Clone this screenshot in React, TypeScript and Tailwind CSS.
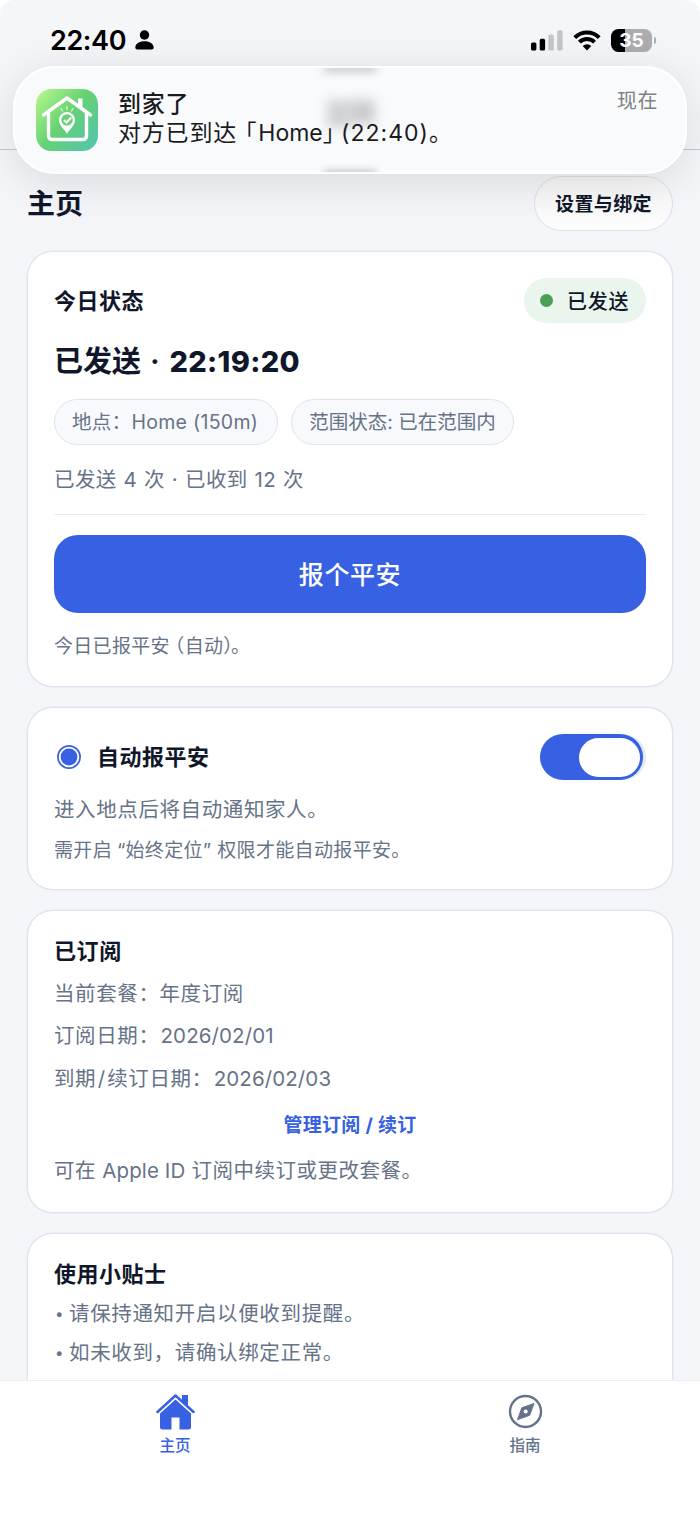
import { FC, ReactNode } from "react";

type CardProps = {
  children: ReactNode;
  className?: string;
};

const Card: FC<CardProps> = ({ children, className = "" }) => {
  return (
    <section
      className={`flex shrink-0 flex-col rounded-[26px] border border-[#dfe4ed] bg-white px-[26px] pt-[26px] shadow-[0_0_0_0.5px_#e2e6ee] ${className}`}
    >
      {children}
    </section>
  );
};

const StatusBar: FC = () => {
  return (
    <header className="h-[150px] shrink-0 border-b border-[#c9cacf] pt-[22px]">
      <div className="flex h-9 items-center justify-between pr-[44px] pl-[50px]">
        <div className="flex items-center gap-[9px]">
          <span className="pt-px text-[27px] leading-9 font-semibold tracking-[-0.4px] text-black">
            22:40
          </span>
          <svg className="h-5 w-[19px]" viewBox="0 0 19 20" fill="#000">
            <circle cx="9.5" cy="5" r="4.7" />
            <path d="M.3 17.6C.3 13.9 4.2 11.3 9.5 11.3s9.2 2.6 9.2 6.3c0 1.3-.8 2-2 2H2.3c-1.2 0-2-.7-2-2z" />
          </svg>
        </div>
        <div className="flex items-center">
          <svg className="h-[21px] w-[33px]" viewBox="0 0 33 21">
            <rect x="0" y="12.5" width="5.4" height="8" rx="1.6" fill="#000" />
            <rect x="8.7" y="8.8" width="5.4" height="11.7" rx="1.6" fill="#000" />
            <rect x="17.4" y="4.5" width="5.4" height="16" rx="1.6" fill="#c5c6ca" />
            <rect x="26.2" y="0.3" width="5.4" height="20.2" rx="1.6" fill="#c5c6ca" />
          </svg>
          <svg className="ml-[9px] h-[21px] w-7" viewBox="0 0 28 21" fill="none" stroke="#000">
            <path d="M1.8 7.6a17.3 17.3 0 0 1 24.4 0" strokeWidth="4.1" />
            <path d="M6.4 12.2a10.8 10.8 0 0 1 15.2 0" strokeWidth="4" />
            <path d="M14 20.5l-4.3-4.4a6.1 6.1 0 0 1 8.6 0z" fill="#000" stroke="none" />
          </svg>
          <div className="ml-[10px] flex h-[23px] w-[41px] items-center justify-center rounded-[7.5px] bg-[linear-gradient(90deg,#000_35%,#acadb0_35%)] text-[19px] leading-none font-bold text-white">
            35
          </div>
          <div className="ml-[1.5px] h-[7px] w-[2.5px] rounded-r-full bg-[#acadb0]" />
        </div>
      </div>
    </header>
  );
};

const AppLogo: FC = () => {
  return (
    <svg className="size-[62px] shrink-0" viewBox="0 0 62 62" fill="none">
      <defs>
        <linearGradient id="logo" x1="2" y1="4" x2="60" y2="52" gradientUnits="userSpaceOnUse">
          <stop stopColor="#b2f58a" />
          <stop offset=".5" stopColor="#66d174" />
          <stop offset="1" stopColor="#55c6a6" />
        </linearGradient>
      </defs>
      <rect width="62" height="62" rx="15.5" fill="url(#logo)" />
      <path d="M42 9.5h4.5v12l-4.5-4z" fill="#fff" />
      <path
        d="M7.5 26L31 9 54.5 26"
        stroke="#fff"
        strokeWidth="3.5"
        strokeLinecap="round"
        strokeLinejoin="round"
      />
      <path
        d="M12.5 24v23a3.5 3.5 0 0 0 3.5 3.5h31a3.5 3.5 0 0 0 3.5-3.5V24"
        stroke="#fff"
        strokeWidth="3.4"
      />
      <path d="M31 45c-2-4.500-8-8-8-14a8 8 0 0 1 16 0c0 6-6 9.500-8 14z" fill="#fff" />
      <circle cx="31" cy="31" r="5.7" fill="#6bd279" />
      <path d="M28 31l2.5 2.5 4.7-5" stroke="#fff" strokeWidth="2" />
      <path
        d="M31 17.5v3M25 19.5l1.5 2.5M37 19.5L35.5 22"
        stroke="#e3f9dd"
        strokeWidth="1.2"
        strokeLinecap="round"
      />
    </svg>
  );
};

const Banner: FC = () => {
  return (
    <div className="absolute top-[66px] left-[13px] flex h-[108px] w-[674px] overflow-hidden rounded-[42px] border-2 border-white bg-[#f9fafc] pt-[21px] pr-[27px] pl-[21px]">
      {/* blurred page text showing through the glass */}
      <div className="absolute -top-1 left-[309px] h-2 w-13 bg-[#777] opacity-40 blur-[4px]" />
      <div className="absolute top-8 left-[312px] h-7 w-6 bg-[#777] opacity-30 blur-[6px]" />
      <div className="absolute top-8 left-[336px] h-6 w-6 bg-[#777] opacity-35 blur-[6px]" />
      <div className="absolute -bottom-1 left-[309px] h-1.5 w-13 bg-[#777] opacity-40 blur-[3px]" />
      <AppLogo />
      <div className="relative ml-5 flex-1 pt-px text-[#1b1b1d]">
        <p className="text-[23px] leading-[29px] font-medium tracking-[0.8px]">到家了</p>
        <p className="text-[23px] leading-[29px] tracking-[0.8px] whitespace-nowrap">
          对方已到达
          <span className="ml-[8px] [font-feature-settings:'halt']">&#x300C;</span>
          <span className="ml-px tracking-normal">Home</span>
          <span className="[font-feature-settings:'halt']">&#x300D;</span>
          <span className="ml-[6px] tracking-[1px]">(22:40)</span>&#x3002;
        </p>
      </div>
      <span className="relative text-xl leading-[25px] tracking-[0.5px] text-[#7f8082]">
        现在
      </span>
    </div>
  );
};

const StatusCard: FC = () => {
  return (
    <Card className="pb-[25px]">
      <div className="flex h-[45px] items-center justify-between">
        <h2 className="pt-0.5 text-[22px] font-bold tracking-[0.5px]">今日状态</h2>
        <div className="flex h-[45px] w-[122px] items-center gap-[14px] rounded-full bg-[#eaf5ed] pl-4 text-xl font-medium tracking-[0.7px] whitespace-nowrap">
          <span className="size-[13px] rounded-full bg-[#4a9f52]" />
          <span className="pt-0.5">已发送</span>
        </div>
      </div>
      <div className="mt-[17px] flex h-[42px] items-center pt-0.5 text-[29px] font-bold whitespace-pre">
        已发送<span className="mx-[2px]"> · </span>
        <span className="ml-px font-extrabold tracking-[0.3px]">22:19:20</span>
      </div>
      <div className="mt-[17px] flex h-[46px] gap-[13px] text-[19.5px] text-[#667388]">
        <span className="flex w-[224px] items-center rounded-full border-[1.5px] border-[#dfe4ed] bg-[#f8f9fc] pt-0.5 pl-[17px] tracking-[0.3px] whitespace-nowrap">
          地点&#xFF1A;<span className="tracking-[0.3px]">Home (150m)</span>
        </span>
        <span className="flex w-[223px] items-center justify-center rounded-full border-[1.5px] border-[#dfe4ed] bg-[#f8f9fc] pt-0.5 whitespace-nowrap">
          范围状态: 已在范围内
        </span>
      </div>
      <p className="mt-5 text-[20.5px] leading-[30px] tracking-[0.4px] text-[#667388] [word-spacing:0.7px]">
        已发送 4 次 · 已收到 12 次
      </p>
      <hr className="mt-[19px] border-[#e8ebf1]" />
      <button className="mt-5 h-[78px] rounded-[24px] bg-[#3761e2] pt-[3px] text-[25px] font-medium tracking-[0.6px] text-white">
        报个平安
      </button>
      <p className="mt-[19px] -mb-px text-[19px] leading-[30px] tracking-[0.3px] text-[#667388]">
        今日已报平安
        <span className="ml-[5px] [font-feature-settings:'halt']">&#xFF08;</span>自动
        <span className="[font-feature-settings:'halt']">&#xFF09;</span>
        <span className="-ml-[2px]">&#x3002;</span>
      </p>
    </Card>
  );
};

const AutoCard: FC = () => {
  return (
    <Card className="mt-5 pb-[23px]">
      <div className="flex h-[46px] items-center">
        <svg className="ml-[3px] size-6" viewBox="0 0 24 24">
          <circle cx="12" cy="12" r="11.1" fill="none" stroke="#3761e2" strokeWidth="1.7" />
          <circle cx="12" cy="12" r="8.4" fill="#3761e2" />
        </svg>
        <h2 className="ml-4 flex-1 pt-px text-[22px] font-bold tracking-[0.5px]">自动报平安</h2>
        <div className="h-[46px] w-[106px] rounded-full bg-[#e4e8f1]">
          <div className="flex h-[46px] w-[103px] items-center justify-end rounded-full bg-[#3761e2] pr-[3px]">
            <div className="h-[39px] w-[61px] rounded-full bg-white" />
          </div>
        </div>
      </div>
      <p className="mt-[15px] text-[20.5px] leading-[30px] tracking-[0.6px] text-[#667388]">
        进入地点后将自动通知家人。
      </p>
      <p className="mt-[11px] text-[19px] leading-[30px] tracking-[0.35px] text-[#667388]">
        需开启<span className="ml-[5px] tracking-normal">“</span>始终定位
        <span className="mr-[6px] tracking-normal">”</span>权限才能自动报平安。
      </p>
    </Card>
  );
};

const PlanCard: FC = () => {
  return (
    <Card className="mt-5 pb-[26px] text-[20.5px] leading-[30px] tracking-[0.6px] text-[#667388]">
      <h2 className="-mt-px text-[22px] leading-[30px] font-bold text-[#10172a]">已订阅</h2>
      <p className="mt-[13px]">当前套餐&#xFF1A;年度订阅</p>
      <p className="mt-3">
        订阅日期&#xFF1A;<span className="ml-px tracking-[0.1px]">2026/02/01</span>
      </p>
      <p className="mt-[13px]">
        到期<span className="mx-[1.5px]">/</span>续订日期&#xFF1A;
        <span className="ml-px tracking-[0.1px]">2026/02/03</span>
      </p>
      <a className="mt-[17px] text-center text-[19px] font-bold tracking-[0.3px] text-[#3761e2]">
        管理订阅 / 续订
      </a>
      <p className="mt-[15px] tracking-[0.5px]">
        可在 <span className="tracking-[0.1px]">Apple ID</span> 订阅中续订或更改套餐。
      </p>
    </Card>
  );
};

const TipsCard: FC = () => {
  return (
    <Card className="mt-5 h-[200px] text-[20.5px] leading-[30px] tracking-[0.65px] text-[#667388]">
      <h2 className="-mt-px text-[22px] leading-[30px] font-bold tracking-[0.5px] text-[#10172a]">
        使用小贴士
      </h2>
      <p className="mt-[10px] flex">
        <span className="w-[15px] pl-px text-[15px]">•</span>请保持通知开启以便收到提醒。
      </p>
      <p className="mt-[9px] flex">
        <span className="w-[15px] pl-px text-[15px]">•</span>如未收到&#xFF0C;请确认绑定正常。
      </p>
    </Card>
  );
};

const TabBar: FC = () => {
  return (
    <nav className="grid h-[136px] shrink-0 grid-cols-2 border-t border-[#eceef2] bg-white pt-3 text-[15.5px] leading-[22px] font-medium">
      <div className="flex flex-col items-center text-[#3761e2]">
        <svg className="h-[38px] w-10" viewBox="0 0 40 38" fill="currentColor">
          <path d="M27 2h6v12l-6-6z" />
          <path
            d="M2.5 19L20.5 2.5 38.5 19"
            fill="none"
            stroke="currentColor"
            strokeWidth="2.5"
            strokeLinecap="round"
            strokeLinejoin="round"
          />
          <path d="M20.5 6.5L36 20.5V34a2.5 2.5 0 0 1-2.5 2.5H24.5V24.5h-8v12H7.5A2.5 2.5 0 0 1 5 34V20.5z" />
        </svg>
        <span className="mt-1">主页</span>
      </div>
      <div className="flex flex-col items-center text-[#64738b]">
        <svg className="h-[38px] w-10" viewBox="0 0 40 38">
          <circle cx="20.5" cy="18.5" r="15.5" fill="none" stroke="currentColor" strokeWidth="2.4" />
          <path
            d="M29 10.5l-4.3 11.7-12.2 4.5 4.3-11.9z"
            fill="currentColor"
            stroke="currentColor"
            strokeLinejoin="round"
          />
          <circle cx="20.7" cy="18.6" r="2" fill="#fff" />
        </svg>
        <span className="mt-1">指南</span>
      </div>
    </nav>
  );
};

export default function App() {
  return (
    <div className="relative flex h-[1516px] w-[700px] flex-col overflow-hidden rounded-t-[14px] bg-[#f5f6fa] font-['Inter','Noto_Sans_CJK_SC',sans-serif] text-[#10172a]">
      <StatusBar />
      <main className="flex min-h-0 flex-1 flex-col overflow-hidden px-[27px] pt-[26px]">
        <div className="mb-5 flex h-[55px] shrink-0 items-center justify-between">
          <h1 className="pt-px text-[28px] font-bold">主页</h1>
          <button className="h-[55px] w-[139px] rounded-full border-[1.5px] border-[#dce0ea] bg-linear-to-b from-[#f6f6f7] to-[#fdfdfe] pt-[3px] text-[19px] font-bold tracking-[0.4px]">
            设置与绑定
          </button>
        </div>
        <StatusCard />
        <AutoCard />
        <PlanCard />
        <TipsCard />
      </main>
      <TabBar />
      <div className="absolute top-[66px] left-[13px] h-[108px] w-[674px] rounded-[42px] shadow-[0_8px_48px_rgba(0,0,0,0.12)]" />
      <Banner />
    </div>
  );
}
